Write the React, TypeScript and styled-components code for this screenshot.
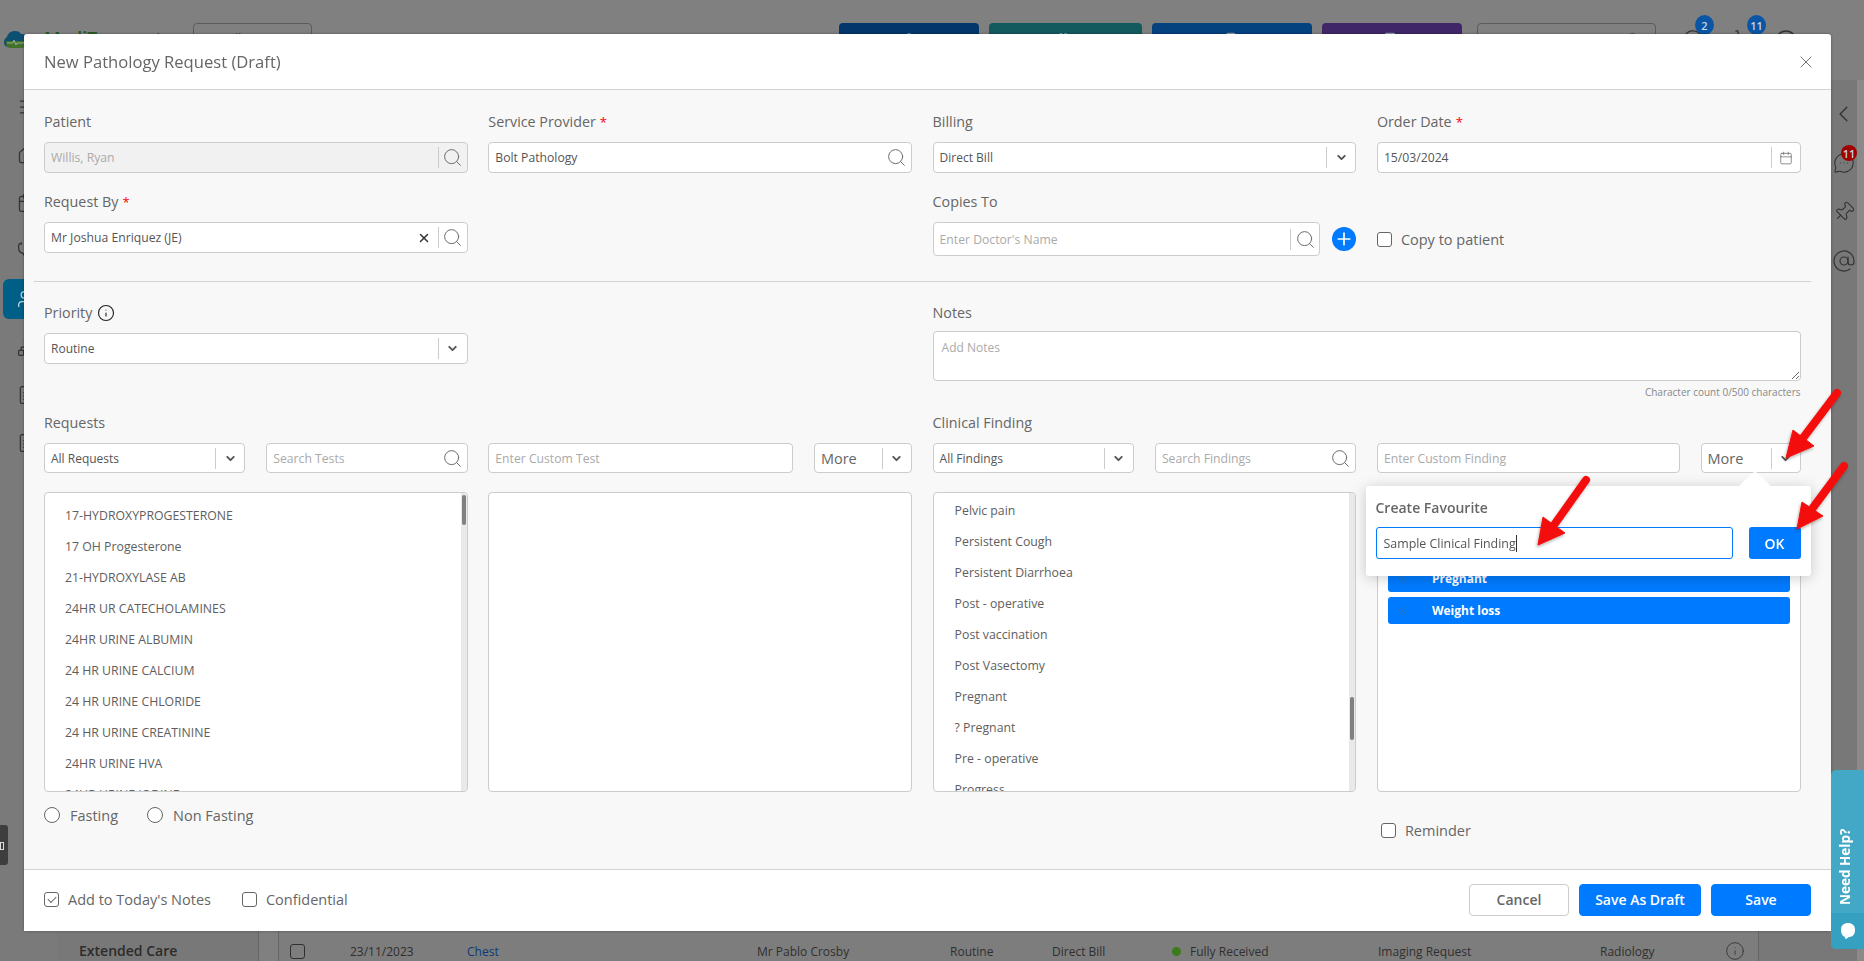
import React from 'react';
import styled, { createGlobalStyle } from 'styled-components';
import {
  AtSign,
  Calendar,
  ChevronDown,
  ChevronLeft,
  Copy,
  FileText,
  HelpCircle,
  Home,
  Info,
  Menu,
  MessageCircle,
  MessageCircleMore,
  Network,
  Pin,
  Plus,
  Search,
  ShoppingCart,
  Stethoscope,
  User,
  Users,
  X,
} from 'lucide-react';

const GlobalStyle = createGlobalStyle`
  * {
    box-sizing: border-box;
  }
  html,
  body {
    margin: 0;
    height: 100%;
    overflow: hidden;
  }
  body {
    font-family: 'Open Sans', 'Liberation Sans', sans-serif;
    color: #666;
  }
`;

/* dimmed page behind the dialog */

const Page = styled.div`
  display: flex;
  flex-direction: column;
  width: 1864px;
  height: 961px;
  overflow: hidden;
  background: #808080;
`;

const TopBar = styled.header`
  display: flex;
  flex: 0 0 80px;
  padding-top: 23px;
  box-shadow: 0 1px 4px rgba(0, 0, 0, 0.08);
`;

const LogoWrap = styled.div`
  display: flex;
  flex: 0 0 193px;
  align-items: flex-start;
  gap: 16px;
  padding: 5px 0 0 4px;
`;

const LogoText = styled.span`
  margin-top: 1px;
  font-size: 18px;
  font-weight: 600;
  line-height: 18px;
  color: #2c5a22;
`;

const OutlineButton = styled.div`
  flex: 0 0 119px;
  height: 40px;
  padding-top: 6px;
  border: 1px solid #5c5c5c;
  border-radius: 4px;
  font-size: 12px;
  text-align: center;
  color: #333;
`;

const HeaderActions = styled.div`
  display: flex;
  gap: 10px;
  margin-left: 527px;
`;

const ActionButton = styled.div<{ $bg: string; $width: number }>`
  display: flex;
  justify-content: center;
  width: ${(p) => p.$width}px;
  height: 40px;
  padding-top: 9px;
  border-radius: 4px;
  background: ${(p) => p.$bg};
  color: #8f9fae;
`;

const HeaderSearch = styled.div`
  display: flex;
  justify-content: flex-end;
  flex: 0 0 179px;
  height: 40px;
  margin-left: 15px;
  padding: 8px 14px 0 0;
  border: 1px solid #5c5c5c;
  border-radius: 4px;
  color: #3a3a3a;
`;

const HeaderIcon = styled.div<{ $left: number }>`
  position: relative;
  margin-left: ${(p) => p.$left}px;
  padding-top: 6px;
  color: #333;
`;

const CountBadge = styled.span<{ $bg: string; $size?: number; $top: number; $left: number }>`
  position: absolute;
  top: ${(p) => p.$top}px;
  left: ${(p) => p.$left}px;
  display: flex;
  align-items: center;
  justify-content: center;
  width: ${(p) => p.$size ?? 19}px;
  height: ${(p) => p.$size ?? 20}px;
  border-radius: 50%;
  background: ${(p) => p.$bg};
  font-size: 11px;
  font-weight: 600;
  color: #c7d3df;
`;

const Workspace = styled.div`
  display: flex;
  flex: 1;
  min-height: 0;
`;

const SideNav = styled.nav`
  position: relative;
  flex: 0 0 57px;
  padding: 3px 0 0 3px;
  background: #7a7a7a;
`;

const NavItem = styled.div<{ $active?: boolean }>`
  display: flex;
  align-items: center;
  width: 54px;
  height: 40px;
  margin: 4px 0 8px;
  padding-left: 14px;
  border-radius: 6px;
  background: ${(p) => (p.$active ? '#005f86' : 'transparent')};
  color: ${(p) => (p.$active ? '#b9d5e2' : '#333')};
`;

const DarkTab = styled.div`
  position: absolute;
  top: 745px;
  left: 0;
  width: 8px;
  height: 40px;
  border-radius: 0 3px 3px 0;
  background: #3e3e3e;

  &::after {
    content: '';
    position: absolute;
    top: 17px;
    left: 0;
    width: 2px;
    height: 6px;
    border: 1px solid #ddd;
  }
`;

const SidePanel = styled.aside`
  display: flex;
  flex: 0 0 202px;
  align-items: flex-end;
  padding-left: 22px;
  border-right: 1px solid #666;
  background: #787878;
  box-shadow: -3px 0 5px rgba(0, 0, 0, 0.12);
`;

const SidePanelTitle = styled.div`
  height: 20px;
  font-size: 14px;
  font-weight: 600;
  line-height: 20px;
  color: #2b2b2b;
`;

const Gutter = styled.div`
  flex: 0 0 20px;
  border-right: 1px solid #666;
`;

const TableArea = styled.main`
  display: flex;
  flex: 0 0 1480px;
  align-items: flex-end;
  padding-left: 11px;
  border-right: 1px solid #666;
  background: #7d7d7d;
`;

const TableRow = styled.div`
  display: grid;
  grid-template-columns: 60px 117px 290px 193px 102px 124px 202px 222px 125px 24px;
  align-items: center;
  width: 100%;
  height: 20px;
  font-size: 12px;
  color: #2f2f2f;
`;

const RowBox = styled.span`
  width: 15px;
  height: 15px;
  border: 1px solid #2f2f2f;
  border-radius: 3px;
`;

const RowLink = styled.span`
  color: #0a3a78;
`;

const StatusText = styled.span`
  display: flex;
  align-items: center;
  gap: 9px;
  margin-left: -4px;
`;

const StatusDot = styled.i`
  width: 9px;
  height: 9px;
  border-radius: 50%;
  background: #3d7a1a;
`;

const BackBand = styled.div`
  flex: 0 0 71px;
  background: #787878;
`;

const RightRail = styled.aside`
  display: flex;
  flex: 0 0 27px;
  flex-direction: column;
  align-items: center;
  gap: 23px;
  padding-top: 21px;
  background: #787878;
  color: #333;
`;

const RailIcon = styled.div`
  position: relative;
  display: flex;
  justify-content: center;
  align-items: center;
  width: 27px;
  height: 26px;
`;

const TiltedPin = styled(Pin)`
  transform: rotate(45deg);
`;

const RailEdge = styled.div`
  flex: 1;
  background: #8a8a8a;
`;

const HelpTab = styled.div`
  position: fixed;
  right: 0;
  bottom: 12px;
  z-index: 20;
  display: flex;
  flex-direction: column;
  width: 33px;
  height: 179px;
  border-radius: 5px 0 0 5px;
  background: #43a8c6;
`;

const HelpLabel = styled.div`
  display: flex;
  flex: 1;
  align-items: center;
  justify-content: center;
  padding: 0 0 50px 5px;
  color: #fff;
  font-size: 13.5px;
  font-weight: 700;
  writing-mode: vertical-rl;
  transform: rotate(180deg);
`;

const HelpChat = styled.div`
  display: flex;
  flex: 0 0 36px;
  align-items: center;
  justify-content: center;
  border-radius: 0 0 0 5px;
  background: #35a0c0;
  color: #fff;
`;

/* dialog */

const Modal = styled.section`
  position: fixed;
  top: 34px;
  left: 24px;
  z-index: 10;
  display: flex;
  flex-direction: column;
  width: 1807px;
  height: 897px;
  border-radius: 3px;
  background: #fff;
  box-shadow: 0 0 3px rgba(0, 0, 0, 0.35);
`;

const ModalHeader = styled.div`
  display: flex;
  flex: 0 0 56px;
  align-items: center;
  justify-content: space-between;
  padding: 0 15px 0 20px;
  border-bottom: 1px solid #d2d2d2;
`;

const ModalTitle = styled.h1`
  margin: 0;
  font-size: 16.6px;
  font-weight: 500;
  color: #666;
`;

const CloseButton = styled.button`
  display: flex;
  padding: 0;
  border: none;
  background: none;
  color: #555;
`;

const ModalBody = styled.div`
  flex: 1;
  padding: 23px 30.5px 0 20px;
  background: #f8f8f8;
`;

const FourColumns = styled.div`
  display: grid;
  grid-template-columns: repeat(4, 1fr);
  align-items: start;
  column-gap: 20.7px;
`;

const TopFields = styled(FourColumns)`
  row-gap: 20px;
`;

const Spacer = styled.div``;

const Field = styled.div<{ $span?: number }>`
  grid-column: span ${(p) => p.$span ?? 1};
  min-width: 0;
`;

const Label = styled.div`
  display: flex;
  align-items: center;
  gap: 4px;
  height: 20px;
  margin-bottom: 9px;
  padding-bottom: 3px;
  font-size: 14.3px;
  color: #666;
`;

const Required = styled.span`
  font-size: 13px;
  color: #f00;
`;

const LabelInfo = styled(Info)`
  margin-left: 1px;
  color: #222;
`;

const Box = styled.div<{ $height?: number; $disabled?: boolean }>`
  display: flex;
  align-items: center;
  height: ${(p) => p.$height ?? 31}px;
  border: 1px solid #ccc;
  border-radius: 4px;
  background: ${(p) => (p.$disabled ? '#f1f1f1' : '#fff')};
`;

const BoxInput = styled.input<{ $disabled?: boolean }>`
  flex: 1;
  min-width: 0;
  height: 100%;
  padding: 0 6px;
  border: none;
  outline: none;
  background: transparent;
  font-family: inherit;
  font-size: 12.2px;
  color: ${(p) => (p.$disabled ? '#aaa' : '#555')};

  &::placeholder {
    color: #aaa;
    opacity: 1;
  }
`;

const ControlSlot = styled.span<{ $divider?: boolean; $width?: number }>`
  display: flex;
  flex: 0 0 ${(p) => p.$width ?? 29}px;
  align-items: center;
  justify-content: center;
  height: 21px;
  border-left: ${(p) => (p.$divider ? '1px solid #ccc' : 'none')};
  color: #666;
`;

const ClearMark = styled.span`
  display: flex;
  margin-right: 7px;
  color: #333;
`;

const CopiesRow = styled.div`
  display: grid;
  grid-template-columns: 1fr 24px;
  align-items: center;
  column-gap: 12px;
`;

const AddCircle = styled.button`
  display: flex;
  align-items: center;
  justify-content: center;
  width: 24px;
  height: 24px;
  padding: 0;
  border: none;
  border-radius: 50%;
  background: #007bff;
  color: #fff;
`;

const CheckRow = styled.label<{ $weight?: number }>`
  display: flex;
  align-items: center;
  gap: 9px;
  font-size: 14.5px;
  font-weight: ${(p) => p.$weight ?? 400};
  color: #666;
`;

const CheckBox = styled.input.attrs({ type: 'checkbox', readOnly: true })`
  flex: none;
  appearance: none;
  display: flex;
  align-items: center;
  justify-content: center;
  width: 15px;
  height: 15px;
  margin: 0;
  border: 1px solid #666;
  border-radius: 3px;
  background: #fff;

  &:checked::after {
    content: '';
    width: 7px;
    height: 4px;
    margin-top: -2px;
    border-left: 1px solid #666;
    border-bottom: 1px solid #666;
    transform: rotate(-45deg);
  }
`;

const CopyCheck = styled.div`
  display: flex;
  align-items: center;
  height: 34px;
`;

const Divider = styled.hr`
  height: 1px;
  margin: 25px -10px 22px;
  border: none;
  background: #d2d2d2;
`;

const NotesArea = styled.textarea`
  display: block;
  width: 100%;
  height: 50px;
  margin-top: -2px;
  padding: 7px 8px;
  border: 1px solid #ccc;
  border-radius: 4px;
  outline: none;
  background: #fff;
  font-family: inherit;
  font-size: 12px;
  color: #555;

  &::placeholder {
    color: #aaa;
    opacity: 1;
  }
`;

const CharCount = styled.div`
  margin-top: 4px;
  font-size: 10px;
  line-height: 14px;
  text-align: right;
  color: #888;
`;

const RequestsGrid = styled(FourColumns)`
  margin-top: 15px;
`;

const SplitCell = styled.div<{ $columns: string }>`
  display: grid;
  grid-template-columns: ${(p) => p.$columns};
  column-gap: 21px;

  ${Box} {
    height: 30px;
  }
`;

const SelectText = styled.span`
  flex: 1;
  padding-left: 6px;
  font-size: 12px;
  color: #555;
`;

const MoreWrap = styled.div`
  position: relative;
`;

const MoreText = styled.span`
  flex: 1;
  padding-left: 6px;
  font-size: 14.5px;
  font-weight: 500;
  color: #666;
`;

const Popover = styled.div`
  position: absolute;
  top: 43px;
  right: -10px;
  z-index: 5;
  width: 445px;
  height: 90px;
  padding: 10px;
  border-radius: 3px;
  background: #fff;
  box-shadow: 0 2px 14px rgba(0, 0, 0, 0.2);

  &::before {
    content: '';
    position: absolute;
    top: -15px;
    right: 40px;
    border-left: 16px solid transparent;
    border-right: 16px solid transparent;
    border-bottom: 15px solid #fff;
  }
`;

const PopoverTitle = styled.div`
  height: 24px;
  padding-top: 1px;
  font-size: 14px;
  font-weight: 600;
  line-height: 22px;
  color: #666;
`;

const PopoverForm = styled.div`
  display: grid;
  grid-template-columns: 357px 52px;
  justify-content: space-between;
  margin-top: 7px;
`;

const ActiveField = styled.div`
  display: flex;
  align-items: center;
  height: 32px;
  padding-left: 7px;
  border: 1px solid #007bff;
  border-radius: 3px;
  font-size: 12.4px;
  color: #555;

  &::after {
    content: '';
    width: 1px;
    height: 17px;
    background: #333;
  }
`;

const PopoverOk = styled.button`
  height: 32px;
  padding: 0;
  border: none;
  border-radius: 3px;
  background: #007bff;
  font-family: inherit;
  font-size: 14px;
  font-weight: 600;
  color: #fff;
`;

const ListBox = styled.div<{ $offset?: number; $inset?: number }>`
  position: relative;
  height: 300px;
  margin-top: 19px;
  padding: ${(p) => p.$offset ?? 0}px 0 0 ${(p) => p.$inset ?? 20}px;
  overflow: hidden;
  border: 1px solid #ccc;
  border-radius: 4px;
  background: #fff;
`;

const ListItem = styled.div`
  height: 31px;
  font-size: 12.3px;
  line-height: 31px;
  color: #5e5e5e;
`;

const Track = styled.div`
  position: absolute;
  top: 0;
  right: 0;
  bottom: 0;
  width: 6px;
  background: #e9e9e9;
`;

const Thumb = styled.div<{ $top: number; $height: number }>`
  position: absolute;
  top: ${(p) => p.$top}px;
  right: 1px;
  width: 4px;
  height: ${(p) => p.$height}px;
  border-radius: 2px;
  background: #808080;
`;

const ChipList = styled.div`
  display: flex;
  flex-direction: column;
  gap: 5px;
  height: 300px;
  margin-top: 19px;
  padding: 72px 10px 0 10px;
  border: 1px solid #ccc;
  border-radius: 4px;
  background: #fff;
`;

const Chip = styled.div`
  display: flex;
  align-items: center;
  height: 27px;
  padding-left: 8px;
  border-radius: 3px;
  background: #007bff;
  font-size: 12px;
  font-weight: 700;
  color: #fff;
`;

const ChipClose = styled.span`
  display: flex;
  width: 36px;
  color: #4a6a8e;
`;

const RadioRow = styled.div`
  display: flex;
  gap: 29px;
  margin-top: 15px;
`;

const RadioLabel = styled.label`
  display: flex;
  align-items: center;
  gap: 10px;
  height: 16px;
  font-size: 14.5px;
  color: #666;
`;

const Radio = styled.input.attrs({ type: 'radio', readOnly: true })`
  flex: none;
  appearance: none;
  width: 16px;
  height: 16px;
  margin: 0;
  border: 1px solid #666;
  border-radius: 50%;
  background: #fff;
`;

const ReminderCell = styled.div`
  margin-top: 29px;
  padding-left: 4px;
`;

const ModalFooter = styled.div`
  display: flex;
  flex: 0 0 62px;
  align-items: center;
  justify-content: space-between;
  padding: 0 20px 2px;
  border-top: 1px solid #d2d2d2;
  background: #fff;
`;

const FooterChecks = styled.div`
  display: flex;
  gap: 31px;
`;

const FooterButtons = styled.div`
  display: flex;
  gap: 10px;
`;

const Button = styled.button<{ $primary?: boolean; $width: number }>`
  width: ${(p) => p.$width}px;
  height: 32px;
  padding: 0;
  border: 1px solid ${(p) => (p.$primary ? '#007bff' : '#ccc')};
  border-radius: 4px;
  background: ${(p) => (p.$primary ? '#007bff' : '#fff')};
  font-family: inherit;
  font-size: 14px;
  font-weight: 600;
  color: ${(p) => (p.$primary ? '#fff' : '#666')};
`;

const Annotations = styled.svg`
  position: fixed;
  top: 0;
  left: 0;
  z-index: 30;
  pointer-events: none;
`;

const requestItems = [
  '17-HYDROXYPROGESTERONE',
  '17 OH Progesterone',
  '21-HYDROXYLASE AB',
  '24HR UR CATECHOLAMINES',
  '24HR URINE ALBUMIN',
  '24 HR URINE CALCIUM',
  '24 HR URINE CHLORIDE',
  '24 HR URINE CREATININE',
  '24HR URINE HVA',
  '24HR URINE IODINE',
];

const findingItems = [
  'Pelvic pain',
  'Persistent Cough',
  'Persistent Diarrhoea',
  'Post - operative',
  'Post vaccination',
  'Post Vasectomy',
  'Pregnant',
  '? Pregnant',
  'Pre - operative',
  'Progress',
];

const arrows = [
  { tail: [1837, 393], neck: [1803, 438], tip: [1786, 458], a: [1793, 430], b: [1814, 446] },
  { tail: [1844, 466], neck: [1812, 509], tip: [1797, 529], a: [1802, 502], b: [1823, 516] },
  { tail: [1586, 480], neck: [1554, 525], tip: [1538, 545], a: [1543, 517], b: [1565, 533] },
];

const SearchIcon = () => <Search size={21} strokeWidth={1.1} />;
const Chevron = () => <ChevronDown size={13} strokeWidth={3.5} color="#555" />;

const SelectBox = ({ text }: { text: string }) => (
  <Box>
    <SelectText>{text}</SelectText>
    <ControlSlot $divider>
      <Chevron />
    </ControlSlot>
  </Box>
);

const SearchBox = ({ placeholder, value }: { placeholder?: string; value?: string }) => (
  <Box>
    <BoxInput placeholder={placeholder} defaultValue={value} />
    <ControlSlot>
      <SearchIcon />
    </ControlSlot>
  </Box>
);

const BackgroundPage = () => (
  <Page>
    <TopBar>
      <LogoWrap>
        <svg width="24" height="20" viewBox="0 0 24 20">
          <path d="M5 19c-3 0-5-2-5-5 0-2 1-4 3-5 1-4 4-6 8-6 3 0 5 1 6 3 4 0 7 2 7 5 0 4-3 8-6 8z" fill="#0d4f70" />
          <path d="M2 13h19v3c0 2-1 4-3 4H6c-3 0-4-3-4-7z" fill="#43702a" />
          <path d="M3 15h6l1-3 2 5 1-2h7" fill="none" stroke="#b9c9b0" strokeWidth="0.7" />
        </svg>
        <LogoText>MediTransact</LogoText>
      </LogoWrap>
      <OutlineButton>Willis, Ryan</OutlineButton>
      <HeaderActions>
        <ActionButton $bg="#03366b" $width={140}>
          <User size={16} />
        </ActionButton>
        <ActionButton $bg="#125a5e" $width={153}>
          <Stethoscope size={16} />
        </ActionButton>
        <ActionButton $bg="#04417f" $width={160}>
          <FileText size={16} />
        </ActionButton>
        <ActionButton $bg="#3f2668" $width={140}>
          <Copy size={16} />
        </ActionButton>
      </HeaderActions>
      <HeaderSearch>
        <Search size={16} />
      </HeaderSearch>
      <HeaderIcon $left={26}>
        <MessageCircle size={22} strokeWidth={1.5} />
        <CountBadge $bg="#0a56a5" $top={-8} $left={13}>
          2
        </CountBadge>
      </HeaderIcon>
      <HeaderIcon $left={30}>
        <ShoppingCart size={22} strokeWidth={1.5} />
        <CountBadge $bg="#0a56a5" $top={-8} $left={13}>
          11
        </CountBadge>
      </HeaderIcon>
      <HeaderIcon $left={18}>
        <HelpCircle size={24} strokeWidth={1.5} />
      </HeaderIcon>
    </TopBar>
    <Workspace>
      <SideNav>
        <NavItem>
          <Menu size={20} strokeWidth={1.5} />
        </NavItem>
        <NavItem>
          <Home size={20} strokeWidth={1.5} />
        </NavItem>
        <NavItem>
          <Calendar size={20} strokeWidth={1.5} />
        </NavItem>
        <NavItem>
          <Stethoscope size={20} strokeWidth={1.5} />
        </NavItem>
        <NavItem $active>
          <Users size={20} strokeWidth={1.5} />
        </NavItem>
        <NavItem>
          <Network size={20} strokeWidth={1.5} />
        </NavItem>
        <NavItem>
          <FileText size={20} strokeWidth={1.5} />
        </NavItem>
        <NavItem>
          <FileText size={20} strokeWidth={1.5} />
        </NavItem>
        <DarkTab />
      </SideNav>
      <SidePanel>
        <SidePanelTitle>Extended Care</SidePanelTitle>
      </SidePanel>
      <Gutter />
      <TableArea>
        <TableRow>
          <RowBox />
          <span>23/11/2023</span>
          <RowLink>Chest</RowLink>
          <span>Mr Pablo Crosby</span>
          <span>Routine</span>
          <span>Direct Bill</span>
          <StatusText>
            <StatusDot />
            Fully Received
          </StatusText>
          <span>Imaging Request</span>
          <span>Radiology</span>
          <Info size={20} strokeWidth={1} />
        </TableRow>
      </TableArea>
      <BackBand />
      <RightRail>
        <RailIcon>
          <ChevronLeft size={34} strokeWidth={1.2} />
        </RailIcon>
        <RailIcon>
          <MessageCircleMore size={22} strokeWidth={1.2} />
          <CountBadge $bg="#a00000" $size={16} $top={-5} $left={11}>
            11
          </CountBadge>
        </RailIcon>
        <RailIcon>
          <TiltedPin size={22} strokeWidth={1.2} />
        </RailIcon>
        <RailIcon>
          <AtSign size={24} strokeWidth={1.2} />
        </RailIcon>
      </RightRail>
      <RailEdge />
    </Workspace>
  </Page>
);

const PathologyRequestModal = () => (
  <Modal>
    <ModalHeader>
      <ModalTitle>New Pathology Request (Draft)</ModalTitle>
      <CloseButton>
        <X size={20} strokeWidth={1} />
      </CloseButton>
    </ModalHeader>
    <ModalBody>
      <TopFields>
        <Field>
          <Label>Patient</Label>
          <Box $disabled>
            <BoxInput $disabled defaultValue="Willis, Ryan" />
            <ControlSlot $divider>
              <SearchIcon />
            </ControlSlot>
          </Box>
        </Field>
        <Field>
          <Label>
            Service Provider <Required>*</Required>
          </Label>
          <SearchBox value="Bolt Pathology" />
        </Field>
        <Field>
          <Label>Billing</Label>
          <SelectBox text="Direct Bill" />
        </Field>
        <Field>
          <Label>
            Order Date <Required>*</Required>
          </Label>
          <Box>
            <BoxInput defaultValue="15/03/2024" />
            <ControlSlot $divider>
              <Calendar size={14} strokeWidth={1.25} />
            </ControlSlot>
          </Box>
        </Field>
        <Field>
          <Label>
            Request By <Required>*</Required>
          </Label>
          <Box>
            <BoxInput defaultValue="Mr Joshua Enriquez (JE)" />
            <ClearMark>
              <X size={14} strokeWidth={2.5} />
            </ClearMark>
            <ControlSlot $divider>
              <SearchIcon />
            </ControlSlot>
          </Box>
        </Field>
        <Spacer />
        <Field>
          <Label>Copies To</Label>
          <CopiesRow>
            <Box $height={34}>
              <BoxInput placeholder="Enter Doctor's Name" />
              <ControlSlot $divider>
                <SearchIcon />
              </ControlSlot>
            </Box>
            <AddCircle>
              <Plus size={20} strokeWidth={2} />
            </AddCircle>
          </CopiesRow>
        </Field>
        <Field>
          <Label />
          <CopyCheck>
            <CheckRow $weight={500}>
              <CheckBox />
              Copy to patient
            </CheckRow>
          </CopyCheck>
        </Field>
      </TopFields>
      <Divider />
      <FourColumns>
        <Field>
          <Label>
            Priority <LabelInfo size={18} strokeWidth={1.5} />
          </Label>
          <SelectBox text="Routine" />
        </Field>
        <Spacer />
        <Field $span={2}>
          <Label>Notes</Label>
          <NotesArea placeholder="Add Notes" />
          <CharCount>Character count 0/500 characters</CharCount>
        </Field>
      </FourColumns>
      <RequestsGrid>
        <Field $span={2}>
          <Label>Requests</Label>
        </Field>
        <Field $span={2}>
          <Label>Clinical Finding</Label>
        </Field>
        <SplitCell $columns="1fr 1fr">
          <SelectBox text="All Requests" />
          <SearchBox placeholder="Search Tests" />
        </SplitCell>
        <SplitCell $columns="1fr 98px">
          <Box>
            <BoxInput placeholder="Enter Custom Test" />
          </Box>
          <Box>
            <MoreText>More</MoreText>
            <ControlSlot $divider>
              <Chevron />
            </ControlSlot>
          </Box>
        </SplitCell>
        <SplitCell $columns="1fr 1fr">
          <SelectBox text="All Findings" />
          <SearchBox placeholder="Search Findings" />
        </SplitCell>
        <SplitCell $columns="1fr 100px">
          <Box>
            <BoxInput placeholder="Enter Custom Finding" />
          </Box>
          <MoreWrap>
            <Box>
              <MoreText>More</MoreText>
              <ControlSlot $divider>
                <Chevron />
              </ControlSlot>
            </Box>
            <Popover>
              <PopoverTitle>Create Favourite</PopoverTitle>
              <PopoverForm>
                <ActiveField>Sample Clinical Finding</ActiveField>
                <PopoverOk>OK</PopoverOk>
              </PopoverForm>
            </Popover>
          </MoreWrap>
        </SplitCell>
        <ListBox $offset={7}>
          {requestItems.map((item) => (
            <ListItem key={item}>{item}</ListItem>
          ))}
          <Track>
            <Thumb $top={2} $height={30} />
          </Track>
        </ListBox>
        <ListBox />
        <ListBox $offset={2} $inset={21}>
          {findingItems.map((item) => (
            <ListItem key={item}>{item}</ListItem>
          ))}
          <Track>
            <Thumb $top={204} $height={43} />
          </Track>
        </ListBox>
        <ChipList>
          <Chip>
            <ChipClose>
              <X size={14} strokeWidth={1} />
            </ChipClose>
            Pregnant
          </Chip>
          <Chip>
            <ChipClose>
              <X size={14} strokeWidth={1} />
            </ChipClose>
            Weight loss
          </Chip>
        </ChipList>
        <Field $span={3}>
          <RadioRow>
            <RadioLabel>
              <Radio />
              Fasting
            </RadioLabel>
            <RadioLabel>
              <Radio />
              Non Fasting
            </RadioLabel>
          </RadioRow>
        </Field>
        <ReminderCell>
          <CheckRow>
            <CheckBox />
            Reminder
          </CheckRow>
        </ReminderCell>
      </RequestsGrid>
    </ModalBody>
    <ModalFooter>
      <FooterChecks>
        <CheckRow>
          <CheckBox defaultChecked />
          Add to Today's Notes
        </CheckRow>
        <CheckRow>
          <CheckBox />
          Confidential
        </CheckRow>
      </FooterChecks>
      <FooterButtons>
        <Button $width={100}>Cancel</Button>
        <Button $primary $width={122}>
          Save As Draft
        </Button>
        <Button $primary $width={100}>
          Save
        </Button>
      </FooterButtons>
    </ModalFooter>
  </Modal>
);

export default function App() {
  return (
    <>
      <GlobalStyle />
      <BackgroundPage />
      <PathologyRequestModal />
      <HelpTab>
        <HelpLabel>Need Help?</HelpLabel>
        <HelpChat>
          <svg width="16" height="18" viewBox="0 0 16 18">
            <path d="M8 1c4 0 7 2 7 7 0 4-2 7-6 7l-3 2c-1 0-1-1-1-2-3-1-4-4-4-7 0-5 3-7 7-7z" fill="currentColor" />
          </svg>
        </HelpChat>
      </HelpTab>
      <Annotations width="1864" height="961" viewBox="0 0 1864 961">
        <defs>
          <filter id="arrowShadow" x="-30%" y="-30%" width="160%" height="160%">
            <feDropShadow dx="-1" dy="2" stdDeviation="1.5" floodColor="#000" floodOpacity="0.3" />
          </filter>
        </defs>
        {arrows.map((arrow) => (
          <g key={arrow.tip.join()} fill="#f40d0d" stroke="#f40d0d" filter="url(#arrowShadow)">
            <line
              x1={arrow.tail[0]}
              y1={arrow.tail[1]}
              x2={arrow.neck[0]}
              y2={arrow.neck[1]}
              strokeWidth="8"
              strokeLinecap="round"
            />
            <polygon points={[arrow.a, arrow.b, arrow.tip].map((p) => p.join(',')).join(' ')} strokeWidth="1" />
          </g>
        ))}
      </Annotations>
    </>
  );
}
